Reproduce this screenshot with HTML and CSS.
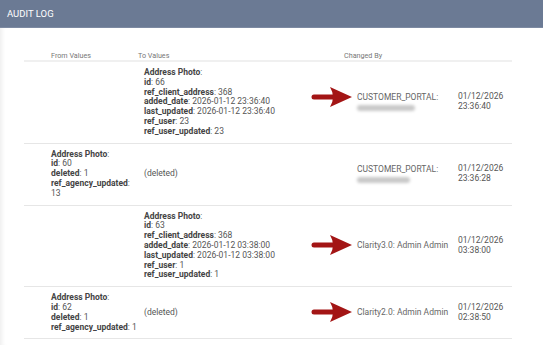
FILE: index.html
```html
<!DOCTYPE html>
<html>
<head>
    <meta charset="utf-8" />
    <title>Audit Log</title>
    <link rel="stylesheet" href="styles.css">
</head>
<body>
<!-- Panel heading -->
<div class="panel-head">AUDIT LOG</div>

<div class="panel-body">
    <table class="audit">
        <colgroup>
            <col class="c-from">
            <col class="c-to">
            <col class="c-by">
            <col class="c-date">
        </colgroup>
        <thead>
        <tr>
            <th class="th-from">From Values</th>
            <th class="th-to">To Values</th>
            <th class="th-by">Changed By</th>
            <th></th>
        </tr>
        </thead>
        <tbody>
        <tr>
            <td class="from"></td>
            <td class="to">
                <b>Address Photo</b>:<br>
                <b>id</b>: 66<br>
                <b>ref_client_address</b>: 368<br>
                <b>added_date</b>: 2026-01-12 23:36:40<br>
                <b>last_updated</b>: 2026-01-12 23:36:40<br>
                <b>ref_user</b>: 23<br>
                <b>ref_user_updated</b>: 23
            </td>
            <td class="by">
                <div class="by-wrap">
                    <svg class="arrow" viewBox="0 0 42 22" width="42" height="22">
                        <line x1="3" y1="11" x2="27" y2="11" stroke="#a31515" stroke-width="5" stroke-linecap="round"/>
                        <path d="M19 1 L41 11 L19 21 Q25 11 19 1 Z" fill="#a31515"/>
                    </svg>
                    CUSTOMER_PORTAL:
                    <div class="blurred" style="width:58px"></div>
                </div>
            </td>
            <td class="date">01/12/2026<br>23:36:40</td>
        </tr>
        <tr>
            <td class="from">
                <b>Address Photo</b>:<br>
                <b>id</b>: 60<br>
                <b>deleted</b>: 1<br>
                <b>ref_agency_updated</b>:<br>
                13
            </td>
            <td class="to">(deleted)</td>
            <td class="by">
                <div class="by-wrap">
                    CUSTOMER_PORTAL:
                    <div class="blurred" style="width:53px"></div>
                </div>
            </td>
            <td class="date">01/12/2026<br>23:36:28</td>
        </tr>
        <tr>
            <td class="from"></td>
            <td class="to">
                <b>Address Photo</b>:<br>
                <b>id</b>: 63<br>
                <b>ref_client_address</b>: 368<br>
                <b>added_date</b>: 2026-01-12 03:38:00<br>
                <b>last_updated</b>: 2026-01-12 03:38:00<br>
                <b>ref_user</b>: 1<br>
                <b>ref_user_updated</b>: 1
            </td>
            <td class="by">
                <div class="by-wrap">
                    <svg class="arrow" viewBox="0 0 42 22" width="42" height="22">
                        <line x1="3" y1="11" x2="27" y2="11" stroke="#a31515" stroke-width="5" stroke-linecap="round"/>
                        <path d="M19 1 L41 11 L19 21 Q25 11 19 1 Z" fill="#a31515"/>
                    </svg>
                    Clarity3.0: Admin Admin
                </div>
            </td>
            <td class="date">01/12/2026<br>03:38:00</td>
        </tr>
        <tr>
            <td class="from">
                <b>Address Photo</b>:<br>
                <b>id</b>: 62<br>
                <b>deleted</b>: 1<br>
                <b>ref_agency_updated</b>: 1
            </td>
            <td class="to">(deleted)</td>
            <td class="by">
                <div class="by-wrap">
                    <svg class="arrow" viewBox="0 0 42 22" width="42" height="22">
                        <line x1="3" y1="11" x2="27" y2="11" stroke="#a31515" stroke-width="5" stroke-linecap="round"/>
                        <path d="M19 1 L41 11 L19 21 Q25 11 19 1 Z" fill="#a31515"/>
                    </svg>
                    Clarity2.0: Admin Admin
                </div>
            </td>
            <td class="date">01/12/2026<br>02:38:50</td>
        </tr>
        </tbody>
    </table>
</div>
</body>
</html>
```

FILE: styles.css
```css
/* ============ Audit log panel ============ */
* {
  box-sizing: border-box;
}
body {
  margin: 0;
  padding: 0;
  font-family: Roboto, "Liberation Sans", sans-serif;
  background-color: #fff;
  color: #555;
}
.panel-head {
  background-color: #6b7a94;
  height: 28px;
  display: flex;
  align-items: center;
  padding: 0 7px;
  font-size: 9.5px;
  color: #fff;
  border-bottom: 1px solid #7d8aa2;
}
.panel-body {
  padding: 14px 31px 0 24px;
  box-shadow: inset 5px 0 4px -3px rgba(0, 0, 0, 0.07);
  height: 317px;
}
.audit {
  width: 488px;
  table-layout: fixed;
  border-collapse: collapse;
  font-size: 8.5px;
  line-height: 9.8px;
}
.c-from { width: 117px; }
.c-to { width: 200px; }
.c-by { width: 109px; }
.c-date { width: 62px; }

.audit th {
  text-align: left;
  font-weight: normal;
  font-size: 7.2px;
  line-height: 9px;
  color: #777;
  padding: 9px 0 0;
  border-bottom: 2px solid #f0f0f0;
}
.audit .th-from { padding-left: 27px; }
.audit .th-to { text-indent: -3px; }
.audit .th-by { padding-left: 3px; }

.audit td {
  vertical-align: middle;
  padding: 6px 0;
  border-bottom: 1px solid #e6e6e6;
}
.audit td b {
  color: #444;
}
.audit td.from {
  padding-left: 27px;
}
.audit td.to {
  padding-left: 3px;
}
.audit td.by {
  padding-left: 16px;
  color: #666;
  white-space: nowrap;
}
.by-wrap {
  position: relative;
}
.arrow {
  position: absolute;
  left: -46px;
  top: -7px;
}
.blurred {
  height: 6px;
  margin-top: 2px;
  background-color: #c9c9c9;
  border-radius: 3px;
  filter: blur(1.5px);
}
.audit td.date {
  padding-left: 8px;
  color: #555;
}
```
